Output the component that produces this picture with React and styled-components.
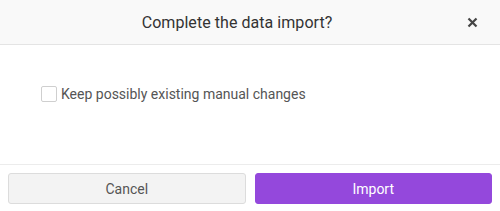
import React, { useState } from "react";
import styled, { createGlobalStyle } from "styled-components";

const Global = createGlobalStyle`
  html, body { margin: 0; padding: 0; background: #fff; }
  body { font-family: Roboto, "Liberation Sans", Arial, sans-serif; }
  * { box-sizing: border-box; }
`;

const Dialog = styled.div`
  width: 500px;
  height: 211px;
  display: flex;
  flex-direction: column;
  background: #fff;
`;

const Header = styled.div`
  height: 45px;
  flex: none;
  display: flex;
  align-items: center;
  background: #f9f9f9;
  border-bottom: 1px solid #e4e4e4;
  padding-left: 8px;
  padding-right: 22px;
`;

const Title = styled.h1`
  flex: 1;
  margin: 0;
  text-align: center;
  font-size: 16px;
  font-weight: 400;
  color: #333;
  letter-spacing: 0.05px;
`;

const Close = styled.button`
  width: 12px;
  height: 12px;
  padding: 0;
  border: none;
  background: none;
  display: flex;
  align-items: center;
  justify-content: center;
  cursor: pointer;
  margin-top: 0px;
`;

const Body = styled.div`
  flex: 1;
  padding: 41px 0 0 41px;
`;

const CheckRow = styled.label`
  display: flex;
  align-items: center;
  gap: 4px;
  font-size: 14px;
  color: #555;
  cursor: pointer;
`;

const Box = styled.span`
  width: 16px;
  height: 16px;
  border: 1px solid #cfcfcf;
  border-radius: 2px;
  background: ${(p) => (p.$checked ? "#9448dc" : "#fff")};
`;

const Footer = styled.div`
  flex: none;
  display: flex;
  gap: 9px;
  padding: 8px 8px 7px 8px;
  border-top: 1px solid #ececec;
`;

const Button = styled.button`
  flex: 1;
  height: 31px;
  border-radius: 3px;
  font-family: inherit;
  font-size: 14px;
  cursor: pointer;
  border: 1px solid ${(p) => (p.$primary ? "#9448dc" : "#dcdcdc")};
  background: ${(p) => (p.$primary ? "#9448dc" : "#f3f3f3")};
  color: ${(p) => (p.$primary ? "#fff" : "#555")};
`;

export default function App() {
  const [checked, setChecked] = useState(false);
  return (
    <>
      <Global />
      <Dialog>
        <Header>
          <Title>Complete the data import?</Title>
          <Close aria-label="Close">
            <svg width="11" height="11" viewBox="0 0 11 11">
              <path d="M1.5 1.5L9.5 9.5M9.5 1.5L1.5 9.5" stroke="#444" strokeWidth="2.2" strokeLinecap="butt" />
            </svg>
          </Close>
        </Header>
        <Body>
          <CheckRow onClick={() => setChecked(!checked)}>
            <Box $checked={checked} />
            Keep possibly existing manual changes
          </CheckRow>
        </Body>
        <Footer>
          <Button>Cancel</Button>
          <Button $primary>Import</Button>
        </Footer>
      </Dialog>
    </>
  );
}
